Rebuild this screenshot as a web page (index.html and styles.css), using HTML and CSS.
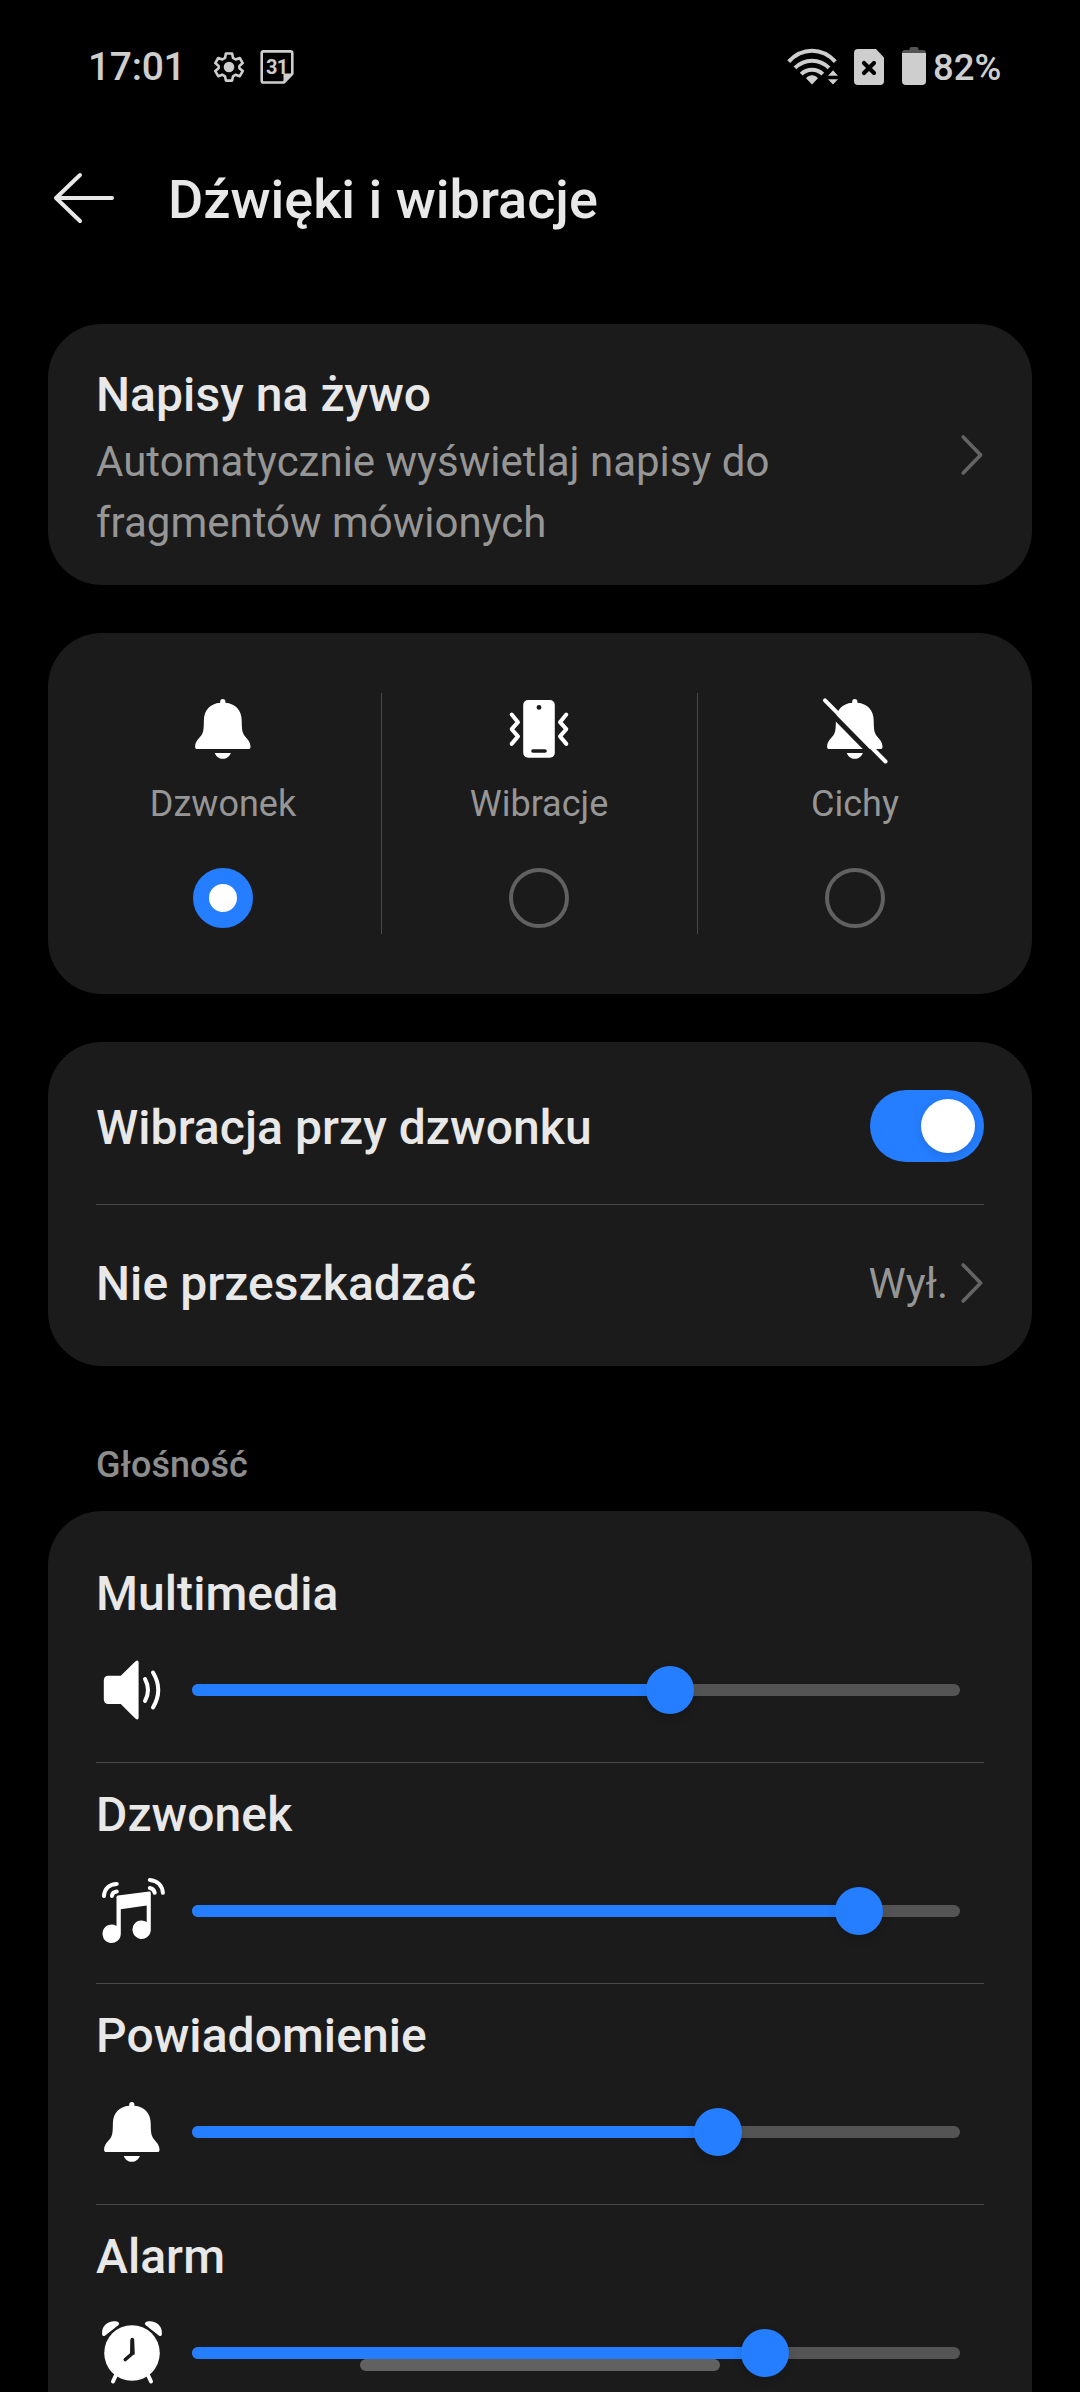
FILE: index.html
```html
<!DOCTYPE html>
<html lang="pl">
<head>
<meta charset="utf-8">
<title>Dźwięki i wibracje</title>
<link rel="stylesheet" href="styles.css">
</head>
<body>
<svg class="defs" aria-hidden="true">
  <symbol id="bell" viewBox="0 0 72 72">
    <path d="M33.2 9.8V8.6a2.6 2.6 0 0 1 5.2 0v1.2C48.4 10.500 54.500 17.500 54.700 27c.1 5 .1 8 .8 11.500C56.900 44.500 63.500 46.500 63.500 53.700c0 1.600-.7 2.300-2.100 2.300H10.200c-1.400 0-2.100-.7-2.100-2.300 0-7.200 6.600-9.200 8-15.200.7-3.500.7-6.500.8-11.500.2-9.500 6.300-16.500 16.300-17.200z"/>
    <path d="M27.700 60h16.200c-1.500 3.600-4.500 5.800-8.100 5.800s-6.600-2.200-8.100-5.800z"/>
  </symbol>
  <symbol id="chevron" viewBox="0 0 24 44">
    <path d="M3.200 4 20.600 22 3.200 40" fill="none" stroke="currentColor" stroke-width="3.600" stroke-linecap="round" stroke-linejoin="round"/>
  </symbol>
</svg>
<div class="screen">
  <header class="status">
    <span class="clock">17:01</span>
    <svg class="gear" viewBox="0 0 30 30">
      <path d="M11.900 1.500h6.200l.9 4.400 2.700 1.600 4.100-1.500 2.900 5.100-3.300 2.900v2.200l3.300 2.900-2.900 5.100-4.100-1.500-2.700 1.600-.9 4.300h-6.200l-.9-4.300-2.700-1.600-4.100 1.500-2.900-5.100 3.300-2.900v-2.200l-3.300-2.900 2.900-5.100 4.100 1.500L11 5.900z" fill="none" stroke="currentColor" stroke-width="2.600" stroke-linejoin="round"/>
      <circle cx="15" cy="15" r="5.300" fill="currentColor"/>
    </svg>
    <svg class="calendar" viewBox="0 0 34 34">
      <path d="M3.500 1.400h27q1.800 0 1.800 1.800v20.600l-8.500 8.700H3.500q-1.800 0-1.800-1.800V3.200q0-1.800 1.800-1.800z" fill="none" stroke="currentColor" stroke-width="2.600" stroke-linejoin="round"/>
      <path d="M32 23.500h-8.500V32z" fill="currentColor"/>
      <text class="day" x="16.800" y="24.200" text-anchor="middle">31</text>
    </svg>
    <span class="spacer"></span>
    <svg class="wifi" viewBox="0 0 52 38">
      <g fill="none" stroke="currentColor" stroke-width="4">
        <path d="M1.700 13.700C15 -.8 35 -.8 48.300 13.700"/>
        <path d="M8 19.900C17.500 10.200 32.500 10.200 42 19.900"/>
        <path d="M14.200 26.200C20 20.300 30 20.300 35.800 26.200"/>
      </g>
      <path d="M19 30.300c3.200-4.200 8.800-4.200 12 0l-6 6.200zM46 22.300l5 5.500H41zM41 31.200h10l-5 5.300z" fill="currentColor"/>
    </svg>
    <svg class="sim" viewBox="0 0 30 36">
      <path d="M4 0h18l8 8.500V32a4 4 0 0 1-4 4H4a4 4 0 0 1-4-4V4a4 4 0 0 1 4-4z" fill="currentColor"/>
      <path d="M10 14l10 10M20 14 10 24" stroke="#000" stroke-width="4.200" stroke-linecap="round"/>
    </svg>
    <svg class="battery" viewBox="0 0 24 38">
      <path d="M0 7V6q0-3 3-3h4.500V2q0-2 2-2h5q2 0 2 2v1H21q3 0 3 3v1z" fill="#545454"/>
      <path d="M0 6h24v28a4 4 0 0 1-4 4H4a4 4 0 0 1-4-4z" fill="currentColor"/>
    </svg>
    <span class="percent">82%</span>
  </header>

  <nav class="topbar">
    <svg class="back" viewBox="0 0 62 52">
      <path d="M27 3 3 26l24 23M3 26h56" fill="none" stroke="currentColor" stroke-width="4" stroke-linecap="round" stroke-linejoin="round"/>
    </svg>
    <h1 class="heading">Dźwięki i wibracje</h1>
  </nav>

  <main class="content">
    <section class="card captions">
      <div class="captions-text">
        <h2 class="label">Napisy na żywo</h2>
        <p class="description">Automatycznie wyświetlaj napisy do<br>fragmentów mówionych</p>
      </div>
      <svg class="chevron"><use href="#chevron"/></svg>
    </section>

    <section class="card modes">
      <div class="mode">
        <svg class="icon"><use href="#bell"/></svg>
        <span class="mode-name">Dzwonek</span>
        <span class="radio radio-on"></span>
      </div>
      <div class="line"></div>
      <div class="mode">
        <svg class="icon" viewBox="0 0 72 72">
          <rect x="20.200" y="7" width="31.600" height="57.800" rx="5"/>
          <circle class="cut" cx="36" cy="14.400" r="2.400"/>
          <path class="cut-line" d="M30 58h12"/>
          <path class="stroke" d="m8.700 21.500 6.300 7.700-6.300 7 6.300 7.200-6.300 7.500M63.300 21.500 57 29.200l6.300 7-6.300 7.200 6.300 7.500"/>
        </svg>
        <span class="mode-name">Wibracje</span>
        <span class="radio"></span>
      </div>
      <div class="line"></div>
      <div class="mode">
        <svg class="icon" viewBox="0 0 72 72">
          <use href="#bell" width="72" height="72"/>
          <path class="cut-gap" d="m2.500 10.500 61 62"/>
          <path class="stroke" d="m6 7.300 60.500 61.200"/>
        </svg>
        <span class="mode-name">Cichy</span>
        <span class="radio"></span>
      </div>
    </section>

    <section class="card options">
      <div class="row">
        <h2 class="label">Wibracja przy dzwonku</h2>
        <span class="toggle"><span class="knob"></span></span>
      </div>
      <div class="row">
        <h2 class="label">Nie przeszkadzać</h2>
        <span class="value">Wył.</span>
        <svg class="chevron"><use href="#chevron"/></svg>
      </div>
    </section>

    <h3 class="section-title">Głośność</h3>

    <section class="card volumes">
      <div class="volume">
        <h2 class="label">Multimedia</h2>
        <div class="control">
          <svg class="icon" viewBox="0 0 72 72">
            <path d="M12.500 21.700h12.300L39.300 7.500q3.300-2.500 3.300 1v55q0 3.500-3.300 1L24.800 50H12.500q-4.700 0-4.700-4.700V26.400q0-4.700 4.700-4.700z"/>
            <path class="stroke" d="M49 25q6 11 0 22M57 18.500q10.500 17.500 0 35"/>
          </svg>
          <div class="track"><div class="fill" style="width:62.300%"></div></div>
        </div>
      </div>
      <div class="volume">
        <h2 class="label">Dzwonek</h2>
        <div class="control">
          <svg class="icon" viewBox="0 0 72 72">
            <path d="M20.500 22q0-1.400 1.400-1.600l31.300-3.900q1.600-.2 1.600 1.400V55a9.200 9.200 0 1 1-4.100-8V30.500l-25.900 3.700V59a9.200 9.200 0 1 1-4.300-8z"/>
            <path class="stroke" d="M7.900 21C8.500 13.500 13.500 9 20.800 8.900M15.900 21q.5-3.900 4.900-4.400M53.800 4.900C61.500 5.500 66.300 10.500 66.900 17.800M53.800 13q4 .5 4.900 4.800"/>
          </svg>
          <div class="track"><div class="fill" style="width:86.900%"></div></div>
        </div>
      </div>
      <div class="volume">
        <h2 class="label">Powiadomienie</h2>
        <div class="control">
          <svg class="icon"><use href="#bell"/></svg>
          <div class="track"><div class="fill" style="width:68.500%"></div></div>
        </div>
      </div>
      <div class="volume">
        <h2 class="label">Alarm</h2>
        <div class="control">
          <svg class="icon" viewBox="0 0 72 72">
            <circle cx="36" cy="36" r="27.800"/>
            <path class="stroke" d="m20 58-3 6.500M52 58l3 6.500"/>
            <path d="M6.100 16.500C5.500 8 13.500 2.600 21.500 4.700c1.900.6 2.200 2.300.7 3.500L8.900 18.700c-1.500 1-2.700.2-2.800-2.200zM65.900 16.500C66.500 8 58.500 2.600 50.500 4.700c-1.900.6-2.200 2.300-.7 3.500l13.300 10.500c1.500 1 2.700.2 2.800-2.200z"/>
            <path class="cut-line" d="M36.300 22.500V36.500l-7 6"/>
            <path class="cut" d="M34.500 22.500h3.600l.7 15h-4.800z"/>
          </svg>
          <div class="track"><div class="fill" style="width:74.600%"></div></div>
        </div>
      </div>
    </section>
  </main>
  <div class="home-bar"></div>
</div>
</body>
</html>
```
FILE: styles.css
```css
* {
  box-sizing: border-box;
  margin: 0;
  padding: 0;
}

body {
  background: #000;
  color: #e8e8e8;
  font-family: Roboto, "Liberation Sans", sans-serif;
}

svg {
  display: block;
  flex: none;
}

.defs {
  display: none;
}

.screen {
  position: relative;
  width: 1080px;
  height: 2392px;
  overflow: hidden;
}

/* Status bar */
.status {
  display: flex;
  align-items: flex-start;
  height: 132px;
  padding: 47px 80px 0 88px;
  color: #cecece;
}

.clock {
  width: 126px;
  padding-top: 1px;
  font-size: 39px;
  line-height: 38px;
  font-weight: 500;
  letter-spacing: -.3px;
}

.gear {
  width: 30px;
  height: 30px;
  margin-top: 5px;
}

.calendar {
  width: 34px;
  height: 34px;
  margin: 3px 0 0 16px;
}

.day {
  fill: currentColor;
  font-size: 20px;
  font-weight: 700;
  letter-spacing: -.8px;
}

.spacer {
  flex: 1;
}

.wifi {
  width: 52px;
  height: 38px;
  margin: 1px 15px 0 0;
}

.sim {
  width: 30px;
  height: 36px;
  margin: 2px 18px 0 0;
}

.battery {
  width: 24px;
  height: 38px;
}

.percent {
  width: 67px;
  margin-left: 7px;
  padding-top: 2px;
  font-size: 36.500px;
  line-height: 38px;
  font-weight: 500;
}

/* Title bar */
.topbar {
  display: flex;
  align-items: center;
  gap: 53px;
  height: 132px;
  padding-left: 53px;
}

.back {
  width: 62px;
  height: 52px;
}

.heading {
  padding-top: 3px;
  font-size: 54px;
  line-height: 64px;
  font-weight: 500;
}

/* Cards */
.content {
  padding: 60px 48px 0;
}

.card {
  margin-bottom: 48px;
  border-radius: 54px;
  background: #1b1b1b;
}

.label {
  font-size: 48px;
  line-height: 58px;
  font-weight: 500;
  letter-spacing: .06px;
}

.chevron {
  width: 24px;
  height: 44px;
  color: #646464;
}

.captions {
  display: flex;
  align-items: center;
  justify-content: space-between;
  height: 261px;
  padding: 0 48px;
}

.captions-text {
  padding-top: 10px;
}

.description {
  margin-top: 7px;
  color: #969696;
  font-size: 42px;
  line-height: 61px;
}

.icon {
  width: 72px;
  height: 72px;
  fill: #fff;
}

.stroke {
  fill: none;
  stroke: #fff;
  stroke-width: 4;
  stroke-linecap: round;
  stroke-linejoin: round;
}

.cut {
  fill: #1b1b1b;
}

.cut-line,
.cut-gap {
  fill: none;
  stroke: #1b1b1b;
  stroke-width: 3.600;
  stroke-linecap: round;
  stroke-linejoin: round;
}

.cut-gap {
  stroke-width: 5;
}

/* Ringer modes */
.modes {
  display: grid;
  grid-template-columns: 315px 1px 315px 1px 315px;
  height: 361px;
  padding: 60px 18px;
}

.line {
  background: #484848;
}

.mode {
  display: flex;
  flex-direction: column;
  align-items: center;
  padding-right: 1px;
}

.mode-name {
  margin: 18px 0 43px;
  color: #969696;
  font-size: 36px;
  line-height: 42px;
}

.radio {
  width: 60px;
  height: 60px;
  border: 4px solid #616161;
  border-radius: 50%;
}

.radio-on {
  border: 16px solid #257eff;
  background: #fff;
}

/* Option rows */
.options {
  height: 324px;
  padding: 6px 48px;
}

.row {
  display: flex;
  align-items: center;
  height: 156px;
}

.row + .row {
  border-top: 1px solid #484848;
}

.row .label {
  flex: 1;
  padding-top: 3px;
}

.toggle {
  display: flex;
  justify-content: flex-end;
  width: 114px;
  height: 72px;
  padding: 9px;
  border-radius: 36px;
  background: #257eff;
}

.knob {
  width: 54px;
  height: 54px;
  border-radius: 50%;
  background: #fff;
  box-shadow: 0 3px 8px rgba(0, 0, 0, .12);
}

.value {
  margin-right: 12px;
  padding-top: 3px;
  color: #969696;
  font-size: 42px;
  line-height: 50px;
}

/* Volume sliders */
.section-title {
  height: 97px;
  padding: 30px 48px 0;
  color: #8d8d8d;
  font-size: 36px;
  line-height: 42px;
  font-weight: 500;
}

.volumes {
  height: 940px;
  padding: 30px 48px 0;
}

.volume {
  height: 221px;
  padding-top: 23px;
}

.volume + .volume {
  border-top: 1px solid #484848;
}

.volume:first-child .label {
  line-height: 60px;
}

.control {
  display: flex;
  align-items: center;
  gap: 24px;
  height: 72px;
  margin-top: 31px;
}

.volume:first-child .control {
  margin-top: 30px;
}

.track {
  width: 768px;
  height: 12px;
  border-radius: 6px;
  background: #545454;
}

.fill {
  display: flex;
  align-items: center;
  justify-content: flex-end;
  height: 12px;
  border-radius: 6px;
  background: #257eff;
}

.fill::after {
  content: "";
  flex: none;
  width: 48px;
  height: 48px;
  margin-right: -24px;
  border-radius: 50%;
  background: #257eff;
  box-shadow: 0 4px 10px rgba(0, 0, 0, .14);
}

/* Gesture bar lies over the scrolling list */
.home-bar {
  position: absolute;
  left: 360px;
  bottom: 21px;
  width: 360px;
  height: 12px;
  border-radius: 6px;
  background: #616161;
}
```
